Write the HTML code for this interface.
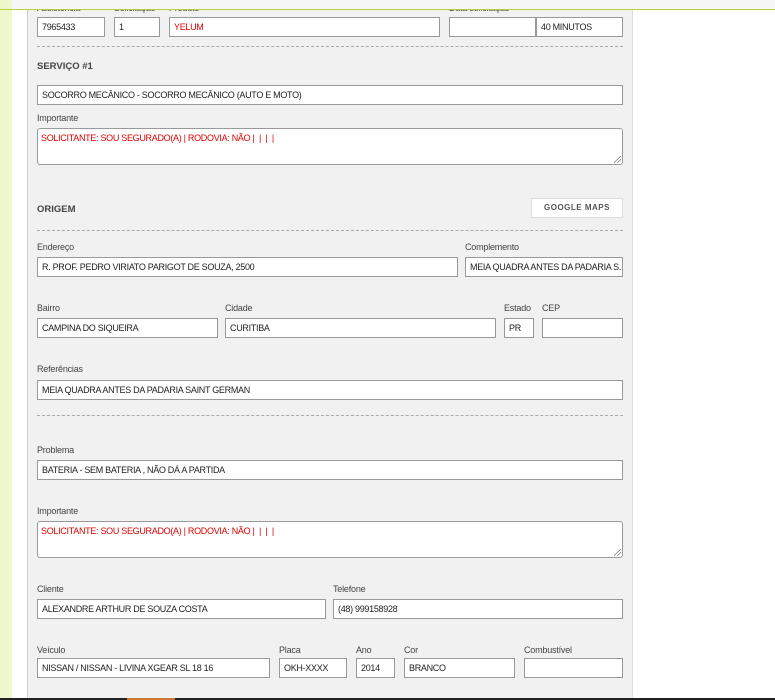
<!DOCTYPE html>
<html><head><meta charset="utf-8"><style>
*{margin:0;padding:0;box-sizing:border-box}
body{width:775px;height:700px;position:relative;background:#fff;font-family:"Liberation Sans",sans-serif;font-size:9px;color:#333;overflow:hidden}
.a{position:absolute}
.in{position:absolute;height:20px;background:#fff;border:1px solid #999;padding:0 4px;line-height:19px;font-size:9px;letter-spacing:-.3px;color:#222;white-space:nowrap;overflow:hidden}
.ta{position:absolute;height:37px;background:#fff;border:1px solid #999;border-radius:3px;padding:4px 3px;font-size:9px;letter-spacing:-.3px;color:#d00}
.lb{position:absolute;font-size:9px;letter-spacing:-.2px;color:#444}
.h{position:absolute;font-size:9.5px;font-weight:bold;color:#444}
.d{position:absolute;left:37px;width:586px;border-top:1px dashed #aaa}
.rz{position:absolute;right:1px;bottom:1px;width:7px;height:7px;background:linear-gradient(135deg,transparent 45%,#777 45%,#777 52%,transparent 52%,transparent 70%,#777 70%,#777 77%,transparent 77%)}
</style></head><body>
<div class="a" style="left:0;top:0;width:12px;height:700px;background:#eef8cc"></div>
<div class="a" style="left:27px;top:0;width:606px;height:700px;background:#f1f1f1;border-left:1px solid #ccc;border-right:1px solid #ddd"></div>
<div class="lb" style="left:37px;top:3px">Assistência</div>
<div class="lb" style="left:114px;top:3px">Solicitação</div>
<div class="lb" style="left:169px;top:3px">Produto</div>
<div class="lb" style="left:449px;top:3px">Data solicitação</div>
<div class="a" style="left:12px;top:0;width:763px;height:9px;background:#f6f6f6"></div>
<div class="a" style="left:0;top:9px;width:775px;height:1px;background:#b8d040"></div>
<div class="in" style="left:37px;top:17px;width:68px">7965433</div>
<div class="in" style="left:114px;top:17px;width:46px">1</div>
<div class="in" style="left:169px;top:17px;width:271px;color:#d00">YELUM</div>
<div class="in" style="left:449px;top:17px;width:87px"></div>
<div class="in" style="left:536px;top:17px;width:87px">40 MINUTOS</div>
<div class="d" style="top:46px"></div>
<div class="h" style="left:37px;top:61px">SERVIÇO #1</div>
<div class="in" style="left:37px;top:85px;width:586px">SOCORRO MECÂNICO - SOCORRO MECÂNICO (AUTO E MOTO)</div>
<div class="lb" style="left:37px;top:113px">Importante</div>
<div class="ta" style="left:37px;top:128px;width:586px">SOLICITANTE: SOU SEGURADO(A) | RODOVIA: NÃO | &nbsp;| &nbsp;| &nbsp;|<div class="rz"></div></div>
<div class="h" style="left:37px;top:204px">ORIGEM</div>
<div class="a" style="left:531px;top:198px;width:92px;height:20px;background:#fff;border:1px solid #ddd;font-size:8px;font-weight:bold;color:#555;text-align:center;line-height:18px;letter-spacing:.5px">GOOGLE MAPS</div>
<div class="d" style="top:230px"></div>
<div class="lb" style="left:37px;top:242px">Endereço</div>
<div class="lb" style="left:465px;top:242px">Complemento</div>
<div class="in" style="left:37px;top:257px;width:421px">R. PROF. PEDRO VIRIATO PARIGOT DE SOUZA, 2500</div>
<div class="in" style="left:465px;top:257px;width:158px">MEIA QUADRA ANTES DA PADARIA S.</div>
<div class="lb" style="left:37px;top:303px">Bairro</div>
<div class="lb" style="left:225px;top:303px">Cidade</div>
<div class="lb" style="left:504px;top:303px">Estado</div>
<div class="lb" style="left:542px;top:303px">CEP</div>
<div class="in" style="left:37px;top:318px;width:181px">CAMPINA DO SIQUEIRA</div>
<div class="in" style="left:225px;top:318px;width:271px">CURITIBA</div>
<div class="in" style="left:504px;top:318px;width:30px">PR</div>
<div class="in" style="left:542px;top:318px;width:81px"></div>
<div class="lb" style="left:37px;top:364px">Referências</div>
<div class="in" style="left:37px;top:380px;width:586px">MEIA QUADRA ANTES DA PADARIA SAINT GERMAN</div>
<div class="d" style="top:415px"></div>
<div class="lb" style="left:37px;top:445px">Problema</div>
<div class="in" style="left:37px;top:460px;width:586px">BATERIA - SEM BATERIA , NÃO DÁ A PARTIDA</div>
<div class="lb" style="left:37px;top:506px">Importante</div>
<div class="ta" style="left:37px;top:521px;width:586px">SOLICITANTE: SOU SEGURADO(A) | RODOVIA: NÃO | &nbsp;| &nbsp;| &nbsp;|<div class="rz"></div></div>
<div class="lb" style="left:37px;top:584px">Cliente</div>
<div class="lb" style="left:333px;top:584px">Telefone</div>
<div class="in" style="left:37px;top:599px;width:289px">ALEXANDRE ARTHUR DE SOUZA COSTA</div>
<div class="in" style="left:333px;top:599px;width:290px">(48) 999158928</div>
<div class="lb" style="left:37px;top:645px">Veículo</div>
<div class="lb" style="left:279px;top:645px">Placa</div>
<div class="lb" style="left:356px;top:645px">Ano</div>
<div class="lb" style="left:404px;top:645px">Cor</div>
<div class="lb" style="left:524px;top:645px">Combustível</div>
<div class="in" style="left:37px;top:658px;width:233px">NISSAN / NISSAN - LIVINA XGEAR SL 18 16</div>
<div class="in" style="left:279px;top:658px;width:68px">OKH-XXXX</div>
<div class="in" style="left:356px;top:658px;width:39px">2014</div>
<div class="in" style="left:404px;top:658px;width:111px">BRANCO</div>
<div class="in" style="left:524px;top:658px;width:99px"></div>
<div class="a" style="left:0;top:698px;width:775px;height:2px;background:#222"></div>
<div class="a" style="left:127px;top:698px;width:48px;height:2px;background:#c87a3a"></div>
</body></html>
